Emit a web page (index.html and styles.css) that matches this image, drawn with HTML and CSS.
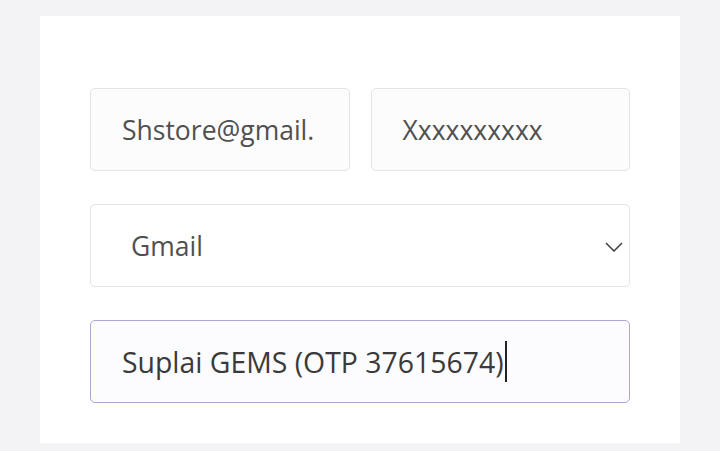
FILE: index.html
```html
<!DOCTYPE html>
<html lang="id">
<head>
<meta charset="UTF-8">
<meta name="viewport" content="width=device-width, initial-scale=1.0">
<title>Form</title>
<link rel="stylesheet" href="styles.css">
</head>
<body>

<div class="card">
  <!-- email dan password -->
  <div class="row">
    <div class="field">Shstore@gmail.</div>
    <div class="field">Xxxxxxxxxx</div>
  </div>

  <!-- pilihan akun -->
  <div class="field select">
    <span class="select-text">Gmail</span>
    <svg class="chevron" width="18" height="10" viewBox="0 0 18 10">
      <path d="M1 1 L9 9 L17 1" fill="none" stroke="#444" stroke-width="1.6"/>
    </svg>
  </div>

  <!-- catatan -->
  <div class="field focused">Suplai GEMS (OTP 37615674)<span class="caret"></span></div>
</div>

</body>
</html>
```

FILE: styles.css
```css
/* halaman */
body {
  margin: 0;
  padding: 16px 40px 8px;
  background: #f3f3f5;
  font-family: 'Open Sans', sans-serif;
}

/* kartu putih */
.card {
  background: #fff;
  padding: 72px 50px 40px;
  display: flex;
  flex-direction: column;
  gap: 33px;
}

.row {
  display: flex;
  gap: 21px;
}

.row .field {
  flex: 1;
}

/* kolom isian */
.field {
  box-sizing: border-box;
  height: 83px;
  border: 1px solid #e4e4e6;
  border-radius: 5px;
  background: #fcfcfc;
  padding: 0 31px;
  display: flex;
  align-items: center;
  font-size: 26.5px;
  color: #505050;
  white-space: nowrap;
  overflow: hidden;
}

.select {
  justify-content: space-between;
  padding-left: 40px;
  padding-right: 6px;
  background: #fff;
}

.chevron {
  margin-top: 2px;
}

.focused {
  border-color: #aaa7d4;
  background: #fcfcfe;
  color: #3a3a3a;
  padding-left: 31px;
  font-size: 28.4px;
}

.caret {
  display: inline-block;
  width: 2px;
  height: 41px;
  background: #222;
  margin-left: 1px;
}
```
